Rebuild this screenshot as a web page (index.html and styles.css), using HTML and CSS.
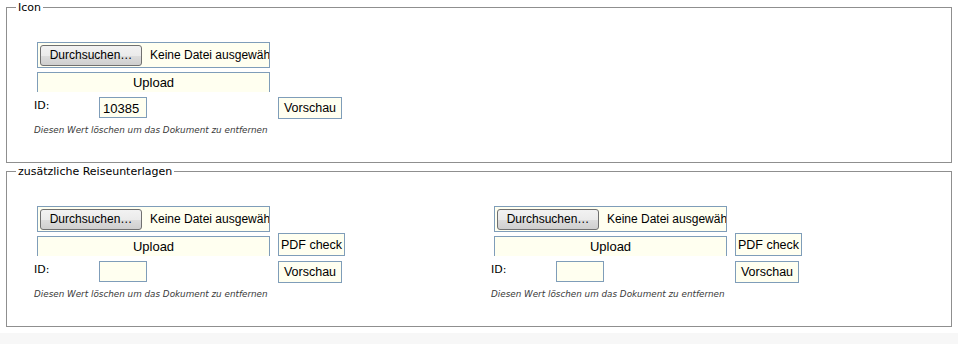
FILE: index.html
```html
<!DOCTYPE html>
<html lang="de">
<head>
    <meta charset="UTF-8">
    <meta name="viewport" content="width=device-width, initial-scale=1.0">
    <title>Dokumente</title>
    <link rel="stylesheet" href="styles.css">
</head>
<body>

    <div class="page">
        <!-- Icon -->
        <fieldset class="group">
            <legend>Icon</legend>
            <div class="docs">
                <div class="doc">
                    <div class="file-box">
                        <span class="browse">Durchsuchen…</span>
                        <span class="file-name">Keine Datei ausgewählt</span>
                    </div>
                    <div class="upload-row">
                        <div class="upload">Upload</div>
                    </div>
                    <div class="id-row">
                        <label class="id-label">ID:</label>
                        <input class="id-input" type="text" value="10385">
                        <button class="btn preview">Vorschau</button>
                    </div>
                    <p class="hint">Diesen Wert löschen um das Dokument zu entfernen</p>
                </div>
            </div>
        </fieldset>

        <!-- Zusätzliche Unterlagen -->
        <fieldset class="group second">
            <legend>zusätzliche Reiseunterlagen</legend>
            <div class="docs">
                <div class="doc">
                    <div class="file-box">
                        <span class="browse">Durchsuchen…</span>
                        <span class="file-name">Keine Datei ausgewählt</span>
                    </div>
                    <div class="upload-row">
                        <div class="upload">Upload</div>
                        <button class="btn pdf">PDF check</button>
                    </div>
                    <div class="id-row">
                        <label class="id-label">ID:</label>
                        <input class="id-input" type="text" value="">
                        <button class="btn preview">Vorschau</button>
                    </div>
                    <p class="hint">Diesen Wert löschen um das Dokument zu entfernen</p>
                </div>
                <div class="doc">
                    <div class="file-box">
                        <span class="browse">Durchsuchen…</span>
                        <span class="file-name">Keine Datei ausgewählt</span>
                    </div>
                    <div class="upload-row">
                        <div class="upload">Upload</div>
                        <button class="btn pdf">PDF check</button>
                    </div>
                    <div class="id-row">
                        <label class="id-label">ID:</label>
                        <input class="id-input" type="text" value="">
                        <button class="btn preview">Vorschau</button>
                    </div>
                    <p class="hint">Diesen Wert löschen um das Dokument zu entfernen</p>
                </div>
            </div>
        </fieldset>
    </div>

</body>
</html>
```

FILE: styles.css
```css
html {
    background-color: #f7f7f7;
}

body {
    margin: 0;
    font-family: "DejaVu Sans", Verdana, sans-serif;
    font-size: 11px;
    color: #000;
}

.page {
    background-color: #fff;
    height: 333px;
    overflow: hidden;
}

.group {
    margin: 0 6px;
    padding: 27px 6px 26px 9px;
    border: 1px solid #8f8f8f;
    min-width: 0;
}

.group.second {
    margin-top: 1px;
}

.group legend {
    padding: 0 2px;
    line-height: 15px;
    font-size: 11px;
}

.docs {
    display: grid;
    grid-template-columns: 457px 457px;
    padding-left: 18px;
}

.file-box {
    margin-left: 3px;
    width: 233px;
    height: 26px;
    box-sizing: border-box;
    border: 1px solid #7f9db9;
    background-color: #fffff0;
    display: flex;
    align-items: center;
    padding-left: 2px;
    overflow: hidden;
    white-space: nowrap;
    font-family: "Liberation Sans", Arial, sans-serif;
}

.browse {
    flex: none;
    width: 102px;
    height: 21px;
    box-sizing: border-box;
    border: 1px solid #707070;
    border-radius: 3px;
    background: linear-gradient(#f2f2f2 0%, #ebebeb 50%, #dddddd 51%, #cfcfcf 100%);
    font-size: 12px;
    line-height: 19px;
    text-align: center;
}

.file-name {
    margin-left: 8px;
    font-size: 12px;
}

.upload-row {
    display: flex;
    align-items: flex-end;
    margin-top: 4px;
}

.upload {
    margin-left: 3px;
    width: 233px;
    height: 20px;
    box-sizing: border-box;
    border: 1px solid #7f9db9;
    border-bottom: none;
    background-color: #fffff0;
    text-align: center;
    font-family: "Liberation Sans", Arial, sans-serif;
    font-size: 13px;
    line-height: 20px;
}

.btn {
    box-sizing: border-box;
    border: 1px solid #7f9db9;
    background-color: #fffff0;
    font-family: "Liberation Sans", Arial, sans-serif;
    font-size: 12.5px;
    color: #000;
    padding: 0;
    margin: 0;
}

.pdf {
    margin-left: 8px;
    margin-top: -3px;
    width: 67px;
    height: 23px;
}

.id-row {
    display: flex;
    align-items: flex-start;
    margin-top: 5px;
}

.id-label {
    width: 65px;
    line-height: 17px;
}

.id-input {
    width: 48px;
    height: 21px;
    box-sizing: border-box;
    border: 1px solid #7f9db9;
    background-color: #fffff0;
    margin: 0;
    padding: 1px 3px 0;
    font-family: "Liberation Sans", Arial, sans-serif;
    font-size: 13px;
    outline: none;
}

.preview {
    margin-left: 131px;
    width: 64px;
    height: 22px;
}

.hint {
    margin: 5px 0 0;
    font-size: 8.8px;
    font-style: italic;
    line-height: 12px;
    color: #3a3a3a;
}
```
